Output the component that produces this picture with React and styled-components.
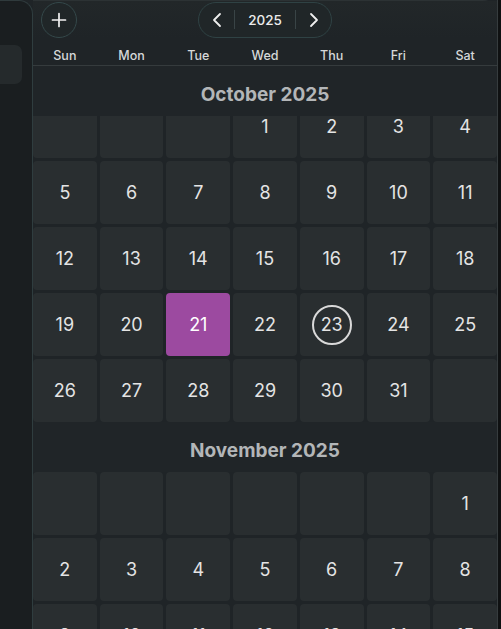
import React, { useLayoutEffect, useRef } from "react";
import styled, { createGlobalStyle } from "styled-components";

const GlobalStyle = createGlobalStyle`
  html, body { margin: 0; padding: 0; background: #121517; }
  body { font-family: Inter, "Noto Sans", "Liberation Sans", sans-serif; -webkit-font-smoothing: antialiased; }
  * { box-sizing: border-box; }
`;

const Shell = styled.div`
  display: flex;
  height: 100vh;
  background: #1f2427;
  overflow: hidden;
`;

const Sidebar = styled.aside`
  width: 33px;
  flex: none;
  background: #1a1e20;
  border-right: 1px solid #2f3d3f;
  border-top: 1px solid #2f3a3c;
  border-top-right-radius: 14px;
  padding-top: 44px;
`;

const SideItem = styled.div`
  width: 22px;
  height: 39px;
  background: #252a2c;
  border-radius: 0 7px 7px 0;
`;

const Panel = styled.main`
  width: 464px;
  flex: none;
  display: flex;
  flex-direction: column;
  background: #1f2427;
  border-top: 1px solid #2c3234;
  border-top-right-radius: 14px;
  min-height: 0;
`;

const Edge = styled.div`
  flex: 1;
  background: #0f1112;
  border-left: 1px solid #363c3e;
`;

const TopBar = styled.header`
  display: grid;
  grid-template-columns: 1fr auto 1fr;
  align-items: center;
  height: 37px;
  padding: 0 8px;
  background: linear-gradient(180deg, #222729 0%, #1f2427 100%);
`;

const RoundButton = styled.button`
  justify-self: start;
  width: 36px;
  height: 36px;
  border-radius: 50%;
  border: 1px solid #34484a;
  background: #202628;
  color: #f2f2f2;
  display: flex;
  align-items: center;
  justify-content: center;
  padding: 0;
`;

const YearPill = styled.div`
  display: flex;
  align-items: center;
  height: 36px;
  border-radius: 18px;
  border: 1px solid #2f4244;
  background: #202628;
`;

const PillButton = styled.button`
  width: 35px;
  height: 100%;
  background: none;
  border: none;
  color: #eeeeee;
  display: flex;
  align-items: center;
  justify-content: center;
  padding: 0;
`;

const PillDivider = styled.span`
  width: 1px;
  height: 19px;
  background: #394446;
`;

const YearLabel = styled.span`
  width: 60px;
  text-align: center;
  font-size: 13.5px;
  font-weight: 500;
  color: #ececec;
`;

const Weekdays = styled.div`
  display: grid;
  grid-template-columns: repeat(7, 1fr);
  column-gap: 3px;
  height: 28px;
  border-bottom: 1px solid #353b3d;
  padding-top: 10px;
`;

const Weekday = styled.span`
  text-align: center;
  font-size: 12.5px;
  font-weight: 500;
  line-height: 16px;
  color: #d6d8d9;
`;

const Scroller = styled.div`
  flex: 1;
  min-height: 0;
  overflow-y: auto;
  scrollbar-width: none;
  &::-webkit-scrollbar { display: none; }
`;

const MonthSection = styled.section`
  display: flex;
  flex-direction: column;
`;

const MonthHeader = styled.h2`
  position: sticky;
  top: 0;
  z-index: 2;
  margin: 0;
  height: 50px;
  padding-top: 6px;
  display: flex;
  align-items: center;
  justify-content: center;
  background: #202528;
  font-size: 19px;
  font-weight: 700;
  color: #b3b6b8;
`;

const DayGrid = styled.div`
  display: grid;
  grid-template-columns: repeat(7, 1fr);
  grid-auto-rows: 63px;
  gap: 3px;
`;

const Cell = styled.div`
  display: flex;
  align-items: center;
  justify-content: center;
  border-radius: 4px;
  background: ${(p) => (p.$selected ? "#9c4aa0" : "#292e30")};
  color: ${(p) => (p.$selected ? "#ffffff" : "#e4e4e4")};
  font-size: 18px;
  font-weight: 400;
`;

const TodayRing = styled.span`
  width: 40px;
  height: 40px;
  border-radius: 50%;
  border: 2px solid #d9d9d9;
  display: flex;
  align-items: center;
  justify-content: center;
`;

const Plus = () => (
  <svg width="16" height="16" viewBox="0 0 16 16" fill="none" stroke="currentColor" strokeWidth="1.7" strokeLinecap="round">
    <path d="M8 1.5v13M1.5 8h13" />
  </svg>
);

const Chevron = ({ dir }) => (
  <svg width="12" height="16" viewBox="0 0 12 16" fill="none" stroke="currentColor" strokeWidth="1.8" strokeLinecap="round" strokeLinejoin="round">
    {dir === "left" ? <path d="M9 2 3 8l6 6" /> : <path d="M3 2l6 6-6 6" />}
  </svg>
);

const WEEKDAYS = ["Sun", "Mon", "Tue", "Wed", "Thu", "Fri", "Sat"];
const MONTHS = [
  { name: "October 2025", start: 3, days: 31 },
  { name: "November 2025", start: 6, days: 30 },
  { name: "December 2025", start: 1, days: 31 },
];

function buildCells(start, days) {
  const cells = [];
  for (let i = 0; i < start; i++) cells.push(null);
  for (let d = 1; d <= days; d++) cells.push(d);
  while (cells.length % 7 !== 0) cells.push(null);
  return cells;
}

export default function App() {
  const scrollRef = useRef(null);
  useLayoutEffect(() => {
    if (scrollRef.current) scrollRef.current.scrollTop = 21;
  }, []);

  return (
    <>
      <GlobalStyle />
      <Shell>
        <Sidebar>
          <SideItem />
        </Sidebar>
        <Panel>
          <TopBar>
            <RoundButton aria-label="Add">
              <Plus />
            </RoundButton>
            <YearPill>
              <PillButton aria-label="Previous year">
                <Chevron dir="left" />
              </PillButton>
              <PillDivider />
              <YearLabel>2025</YearLabel>
              <PillDivider />
              <PillButton aria-label="Next year">
                <Chevron dir="right" />
              </PillButton>
            </YearPill>
          </TopBar>
          <Weekdays>
            {WEEKDAYS.map((w) => (
              <Weekday key={w}>{w}</Weekday>
            ))}
          </Weekdays>
          <Scroller ref={scrollRef}>
            {MONTHS.map((m, mi) => (
              <MonthSection key={m.name}>
                <MonthHeader>{m.name}</MonthHeader>
                <DayGrid>
                  {buildCells(m.start, m.days).map((d, i) => {
                    const selected = mi === 0 && d === 21;
                    const today = mi === 0 && d === 23;
                    return (
                      <Cell key={i} $selected={selected}>
                        {today ? <TodayRing>{d}</TodayRing> : d}
                      </Cell>
                    );
                  })}
                </DayGrid>
              </MonthSection>
            ))}
          </Scroller>
        </Panel>
        <Edge />
      </Shell>
    </>
  );
}
